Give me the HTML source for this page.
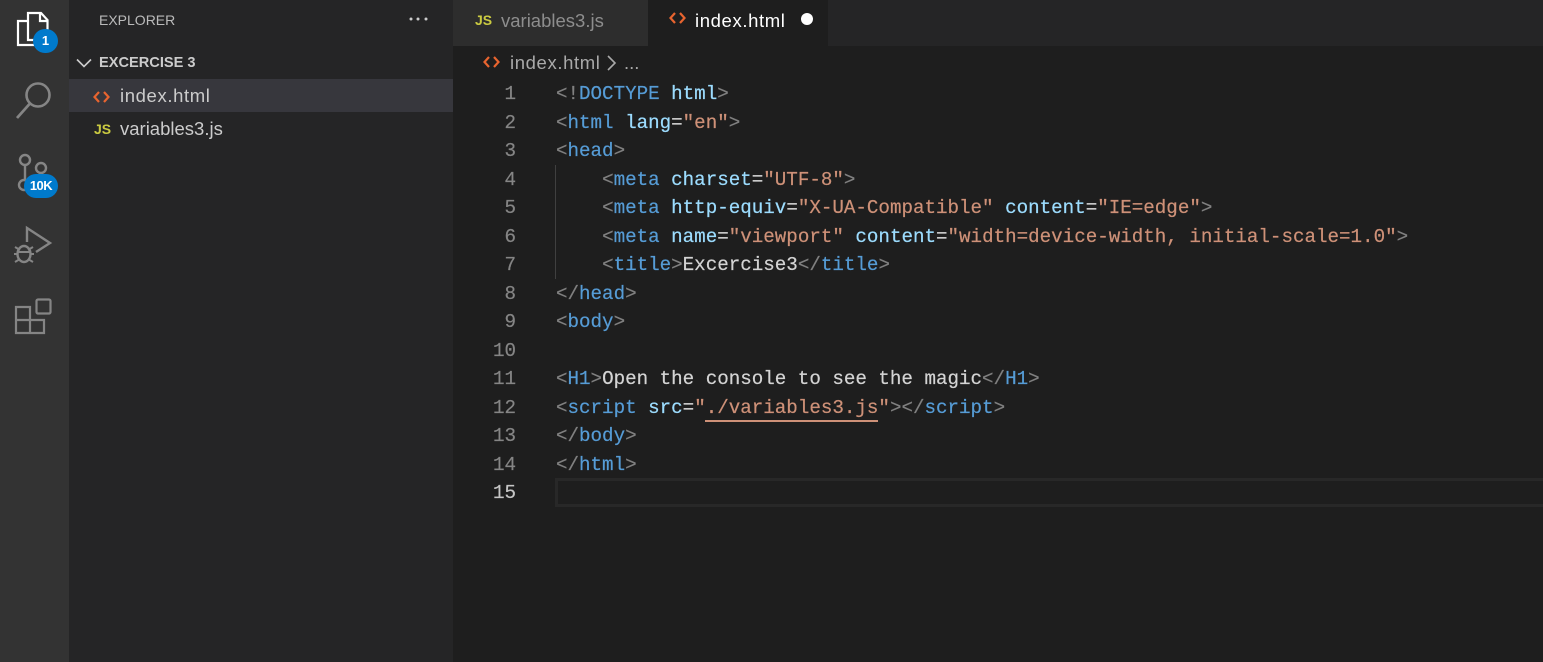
<!DOCTYPE html>
<html><head><meta charset="utf-8"><style>
html,body{margin:0;padding:0;background:#1e1e1e}
#r{position:relative;width:1543px;height:662px;overflow:hidden;background:#1e1e1e;font-family:"Liberation Sans",sans-serif}
.a{position:absolute;white-space:pre}
.ui{font-size:18.5px;line-height:26px;color:#ccc}
.ix{letter-spacing:.62px}
.ln{position:absolute;width:36px;left:480px;text-align:right;font:19.2px/28.5px "Liberation Mono",monospace;color:#858585;-webkit-text-stroke:.2px}
.c{position:absolute;left:556px;font:19.2px/28.5px "Liberation Mono",monospace;color:#d4d4d4;white-space:pre;-webkit-text-stroke:.2px;margin-top:1px}
.ln{margin-top:1px}
.g{color:#808080}.b{color:#569cd6}.l{color:#9cdcfe}.s{color:#ce9178}
.js{font-weight:bold;font-size:14px;color:#cbcb41;line-height:16px}
</style></head><body><div id="r">
<div class="a" style="left:0;top:0;width:69px;height:662px;background:#333"></div>
<div class="a" style="left:69px;top:0;width:384px;height:662px;background:#252526"></div>
<div class="a" style="left:453px;top:0;width:1090px;height:46px;background:#252526"></div>
<div class="a" style="left:453px;top:0;width:195px;height:46px;background:#2d2d2d"></div>
<div class="a" style="left:648px;top:0;width:180px;height:46px;background:#1e1e1e"></div>
<div class="a" style="left:69px;top:79px;width:384px;height:33px;background:#37373d"></div>

<svg class="a" style="left:0;top:0" width="69" height="340" fill="none" stroke="#858585" stroke-width="2.4">
<path d="M28 13H41L47.500 20V40H28Z M40 13V21H47.500 M28 21H18V45H37V40" stroke="#fff" stroke-width="2.2"/>
<circle cx="38" cy="95" r="11.500" stroke-width="2.6"/><path d="M29.500 104L17 118" stroke-width="2.8"/>
<circle cx="25" cy="160" r="5"/><circle cx="41" cy="168" r="5"/><circle cx="24" cy="185" r="5"/><path d="M25 165V180"/>
<path d="M27 242V228L50 243L36 252" stroke-width="2.4"/>
<ellipse cx="24" cy="254" rx="6.500" ry="8" stroke-width="2.4"/>
<path d="M15 247L20 250M33 247L28 250M14 254H18M34 254H30M15 262L20 259M33 262L28 259M18 252H30" stroke-width="2"/>
<path d="M16 307H30V333H16Z M16 320H44V333H30" stroke-width="2.2"/>
<rect x="36.500" y="299.500" width="14" height="14" rx="1.500" stroke-width="2.2"/>
</svg>
<div class="a" style="left:33px;top:29px;width:25px;height:24px;border-radius:12px;background:#007acc;color:#fff;font:bold 13px/24px 'Liberation Sans';text-align:center">1</div>
<div class="a" style="left:24px;top:174px;width:34px;height:24px;border-radius:12px;background:#007acc;color:#fff;font:bold 13px/24px 'Liberation Sans';text-align:center;letter-spacing:-.5px">10K</div>

<div class="a" style="left:99px;top:10px;font-size:14px;line-height:20px;color:#bbb">EXPLORER</div>
<svg class="a" style="left:408px;top:16px" width="22" height="6" fill="#ccc"><circle cx="3" cy="3" r="1.500"/><circle cx="10" cy="3" r="1.500"/><circle cx="18" cy="3" r="1.500"/></svg>
<svg class="a" style="left:76px;top:58px" width="16" height="12" fill="none" stroke="#ccc" stroke-width="1.600"><path d="M1 1.500L8 8.500L15 1.500"/></svg>
<div class="a" style="left:99px;top:53px;font-size:14.600px;line-height:21px;font-weight:bold;color:#ccc">EXCERCISE 3</div>

<svg class="a" style="left:93px;top:89px" width="18" height="16" fill="none" stroke="#e8642f" stroke-width="2.200"><path d="M6 3L1.500 8L6 13M11 3L15.500 8L11 13"/></svg>
<div class="a ui ix" style="left:120px;top:83px">index.html</div>
<div class="a js" style="left:94px;top:121px">JS</div>
<div class="a ui" style="left:120px;top:116px">variables3.js</div>

<div class="a js" style="left:475px;top:12px">JS</div>
<div class="a ui" style="left:501px;top:8px;color:#8d8d8d">variables3.js</div>
<svg class="a" style="left:669px;top:10px" width="18" height="16" fill="none" stroke="#e8642f" stroke-width="2.200"><path d="M6 3L1.500 8L6 13M11 3L15.500 8L11 13"/></svg>
<div class="a ui ix" style="left:695px;top:8px;color:#fff">index.html</div>
<div class="a" style="left:801px;top:13px;width:12px;height:12px;border-radius:50%;background:#fff"></div>

<svg class="a" style="left:483px;top:54px" width="18" height="16" fill="none" stroke="#e8642f" stroke-width="2.200"><path d="M6 3L1.500 8L6 13M11 3L15.500 8L11 13"/></svg>
<div class="a ui ix" style="left:510px;top:50px;color:#a9a9a9">index.html</div>
<svg class="a" style="left:606px;top:55px" width="12" height="16" fill="none" stroke="#a9a9a9" stroke-width="1.600"><path d="M2 1L9 8L2 15"/></svg>
<div class="a ui" style="left:624px;top:50px;color:#a9a9a9">...</div>

<div class="a" style="left:555px;top:165px;width:1px;height:114px;background:#404040"></div>
<div class="a" style="left:555px;top:478px;width:988px;height:29px;box-sizing:border-box;border:3px solid #282828;border-right:0"></div>
<div class="a" style="left:705px;top:420px;width:173px;height:2px;background:#ce9178"></div>

<div class="ln" style="top:79px">1</div>
<div class="ln" style="top:107.500px">2</div>
<div class="ln" style="top:136px">3</div>
<div class="ln" style="top:164.500px">4</div>
<div class="ln" style="top:193px">5</div>
<div class="ln" style="top:221.500px">6</div>
<div class="ln" style="top:250px">7</div>
<div class="ln" style="top:278.500px">8</div>
<div class="ln" style="top:307px">9</div>
<div class="ln" style="top:335.500px">10</div>
<div class="ln" style="top:364px">11</div>
<div class="ln" style="top:392.500px">12</div>
<div class="ln" style="top:421px">13</div>
<div class="ln" style="top:449.500px">14</div>
<div class="ln" style="top:478px;color:#c6c6c6">15</div>

<div class="c" style="top:79px"><span class="g">&lt;!</span><span class="b">DOCTYPE</span> <span class="l">html</span><span class="g">&gt;</span></div>
<div class="c" style="top:107.500px"><span class="g">&lt;</span><span class="b">html</span> <span class="l">lang</span>=<span class="s">"en"</span><span class="g">&gt;</span></div>
<div class="c" style="top:136px"><span class="g">&lt;</span><span class="b">head</span><span class="g">&gt;</span></div>
<div class="c" style="top:164.500px">    <span class="g">&lt;</span><span class="b">meta</span> <span class="l">charset</span>=<span class="s">"UTF-8"</span><span class="g">&gt;</span></div>
<div class="c" style="top:193px">    <span class="g">&lt;</span><span class="b">meta</span> <span class="l">http-equiv</span>=<span class="s">"X-UA-Compatible"</span> <span class="l">content</span>=<span class="s">"IE=edge"</span><span class="g">&gt;</span></div>
<div class="c" style="top:221.500px">    <span class="g">&lt;</span><span class="b">meta</span> <span class="l">name</span>=<span class="s">"viewport"</span> <span class="l">content</span>=<span class="s">"width=device-width, initial-scale=1.0"</span><span class="g">&gt;</span></div>
<div class="c" style="top:250px">    <span class="g">&lt;</span><span class="b">title</span><span class="g">&gt;</span>Excercise3<span class="g">&lt;/</span><span class="b">title</span><span class="g">&gt;</span></div>
<div class="c" style="top:278.500px"><span class="g">&lt;/</span><span class="b">head</span><span class="g">&gt;</span></div>
<div class="c" style="top:307px"><span class="g">&lt;</span><span class="b">body</span><span class="g">&gt;</span></div>
<div class="c" style="top:364px"><span class="g">&lt;</span><span class="b">H1</span><span class="g">&gt;</span>Open the console to see the magic<span class="g">&lt;/</span><span class="b">H1</span><span class="g">&gt;</span></div>
<div class="c" style="top:392.500px"><span class="g">&lt;</span><span class="b">script</span> <span class="l">src</span>=<span class="s">"./variables3.js"</span><span class="g">&gt;&lt;/</span><span class="b">script</span><span class="g">&gt;</span></div>
<div class="c" style="top:421px"><span class="g">&lt;/</span><span class="b">body</span><span class="g">&gt;</span></div>
<div class="c" style="top:449.500px"><span class="g">&lt;/</span><span class="b">html</span><span class="g">&gt;</span></div>
</div></body></html>
